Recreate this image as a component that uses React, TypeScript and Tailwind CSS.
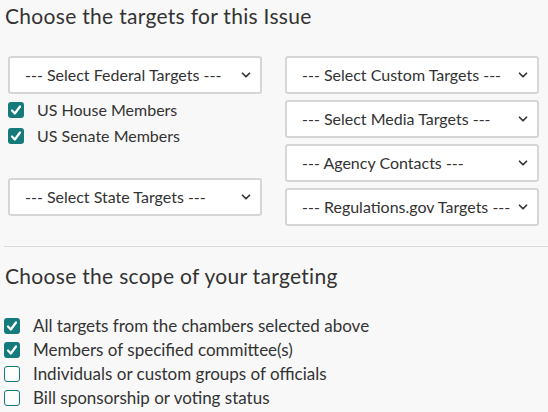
import { ChevronDown } from "lucide-react";

function Dropdown({ label }: { label: string }) {
  return (
    <div className="flex h-[38px] w-[254px] items-center justify-between rounded-[3px] border-2 border-[#d6d6d6] bg-white pl-[15px] pr-[7px] text-[16px] text-[#333]">
      <span className="whitespace-nowrap">{label}</span>
      <ChevronDown size={14} strokeWidth={3} className="text-[#333]" />
    </div>
  );
}

function Check({ checked, label, size = "text-[16px]" }: { checked: boolean; label: string; size?: string }) {
  return (
    <label className={`flex h-[24px] items-center gap-[13px] text-[#333] ${size}`}>
      {checked ? (
        <span className="flex h-[16px] w-[16px] shrink-0 items-center justify-center rounded-[3px] bg-[#177a7a]">
          <svg width="12" height="12" viewBox="0 0 12 12">
            <path d="M2 6.5 L4.8 9.5 L10 2.5" fill="none" stroke="white" strokeWidth="2.2" strokeLinecap="round" strokeLinejoin="round" />
          </svg>
        </span>
      ) : (
        <span className="h-[16px] w-[16px] shrink-0 rounded-[3px] border-[1.5px] border-[#177a7a] bg-white" />
      )}
      <span>{label}</span>
    </label>
  );
}

export default function App() {
  return (
    <div className="h-[412px] w-[548px] overflow-hidden bg-[#f8f8f8] font-['Lato',sans-serif] text-[#333]">
      <h2 className="pl-[5px] pt-[2px] text-[21px] leading-[28px] tracking-[0.3px]">Choose the targets for this Issue</h2>

      <div className="mt-[26px] flex gap-[23px] pl-[8px]">
        <div className="flex flex-col">
          <Dropdown label="--- Select Federal Targets ---" />
          <div className="mt-[4px] flex flex-col gap-[2px]">
            <Check checked label="US House Members" />
            <Check checked label="US Senate Members" />
          </div>
          <div className="mt-[30px]">
            <Dropdown label="--- Select State Targets ---" />
          </div>
        </div>
        <div className="flex flex-col gap-[6px]">
          <Dropdown label="--- Select Custom Targets ---" />
          <Dropdown label="--- Select Media Targets ---" />
          <Dropdown label="--- Agency Contacts ---" />
          <Dropdown label="--- Regulations.gov Targets ---" />
        </div>
      </div>

      <div className="ml-[4px] mt-[20px] h-px bg-[#dcdcdc]" />

      <h2 className="pl-[5px] pt-[15px] text-[21px] leading-[28px] tracking-[0.3px]">Choose the scope of your targeting</h2>

      <div className="mt-[24px] flex flex-col pl-[4px]">
        <Check checked size="text-[17px]" label="All targets from the chambers selected above" />
        <Check checked size="text-[17px]" label="Members of specified committee(s)" />
        <Check checked={false} size="text-[17px]" label="Individuals or custom groups of officials" />
        <Check checked={false} size="text-[17px]" label="Bill sponsorship or voting status" />
      </div>
    </div>
  );
}
